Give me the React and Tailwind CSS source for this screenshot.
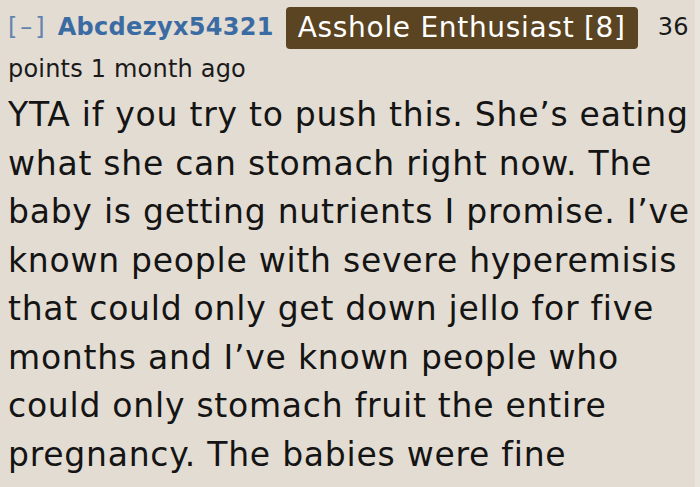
export default function App() {
  return (
    <div className="w-[700px] h-[487px] overflow-hidden bg-[#e3dcd2] flex">
      <div className="flex-1 pl-[8px] pt-[7px]" style={{ fontFamily: '"DejaVu Sans", Verdana, sans-serif' }}>
        <div className="text-[24px] leading-[40px] text-[#1a1a1a]">
          <span className="text-[#6283b0] tracking-[3px]">[–]</span>
          <span className="font-bold text-[#3b6ba3] tracking-[0.3px] ml-[10px]">Abcdezyx54321</span>
          <span className="inline-block align-top bg-[#5b4421] text-white rounded-[4px] px-[12px] text-[28px] tracking-[0.7px] leading-[42px] ml-[12px] mr-[20px]">Asshole Enthusiast [8]</span>
          <span className="tracking-[0.2px]">36</span>{" "}
          <span className="tracking-[0.2px] inline-block">points 1 month ago</span>
        </div>
        <p className="text-[33px] leading-[48.5px] tracking-[0.75px] text-[#141414] mt-[2px]">
          YTA if you try to push this. She’s eating what she can stomach right now. The baby is getting nutrients I promise. I’ve known people with severe hyperemisis that could only get down jello for five months and I’ve known people who could only stomach fruit the entire pregnancy. The babies were fine
        </p>
      </div>
      <div className="w-[5px] bg-[#e9e5de]"></div>
    </div>
  );
}
